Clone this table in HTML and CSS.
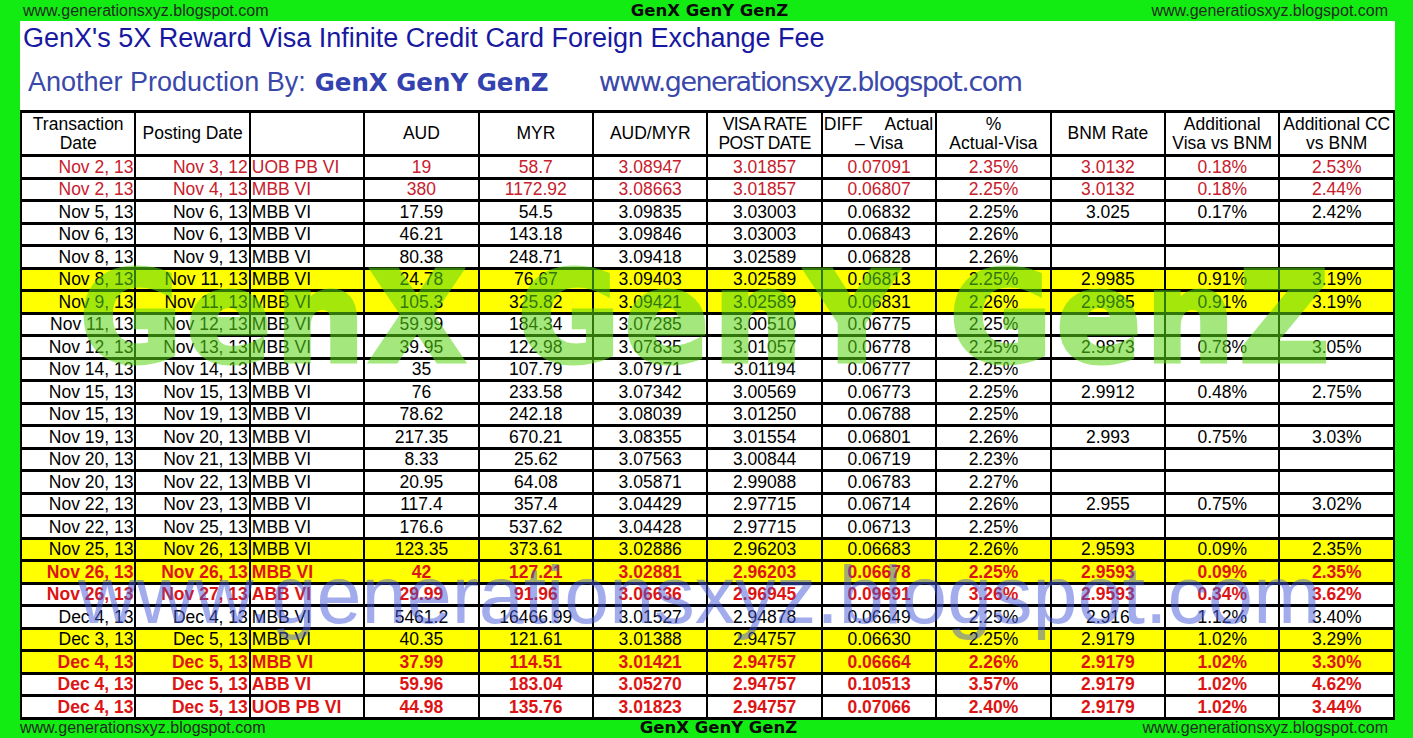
FILE: index.html
```html
<!DOCTYPE html>
<html>
<head>
<meta charset="utf-8">
<link rel="stylesheet" href="styles.css">
</head>
<body>
<div class="frame">
  <div class="bar top-bar">
    <span class="bar-url left">www.generationsxyz.blogspot.com</span>
    <span class="bar-brand">GenX GenY GenZ</span>
    <span class="bar-url right">www.generatiosxyz.blogspot.com</span>
  </div>
  <div class="sheet">
    <div class="title">GenX's 5X Reward Visa Infinite Credit Card Foreign Exchange Fee</div>
    <div class="subtitle"><span class="by">Another Production By:</span><span class="brand">GenX GenY GenZ</span><span class="site">www.generationsxyz.blogspot.com</span></div>
    <table class="grid">
      <colgroup>
        <col><col><col><col><col><col><col><col><col><col><col><col>
      </colgroup>
      <thead>
        <tr class="head">
          <th>Transaction<br>Date</th>
          <th>Posting Date</th>
          <th></th>
          <th>AUD</th>
          <th>MYR</th>
          <th>AUD/MYR</th>
          <th class="tight">VISA RATE<br>POST DATE</th>
          <th class="diff"><div class="diff-top"><span>DIFF</span><span>Actual</span></div><div>– Visa</div></th>
          <th>%<br>Actual-Visa</th>
          <th>BNM Rate</th>
          <th>Additional<br>Visa vs BNM</th>
          <th>Additional CC<br>vs BNM</th>
        </tr>
      </thead>
      <tbody>
        <tr class="red"><td>Nov 2, 13</td><td>Nov 3, 12</td><td>UOB PB VI</td><td>19</td><td>58.7</td><td>3.08947</td><td>3.01857</td><td>0.07091</td><td>2.35%</td><td>3.0132</td><td>0.18%</td><td>2.53%</td></tr>
        <tr class="red"><td>Nov 2, 13</td><td>Nov 4, 13</td><td>MBB VI</td><td>380</td><td>1172.92</td><td>3.08663</td><td>3.01857</td><td>0.06807</td><td>2.25%</td><td>3.0132</td><td>0.18%</td><td>2.44%</td></tr>
        <tr><td>Nov 5, 13</td><td>Nov 6, 13</td><td>MBB VI</td><td>17.59</td><td>54.5</td><td>3.09835</td><td>3.03003</td><td>0.06832</td><td>2.25%</td><td>3.025</td><td>0.17%</td><td>2.42%</td></tr>
        <tr><td>Nov 6, 13</td><td>Nov 6, 13</td><td>MBB VI</td><td>46.21</td><td>143.18</td><td>3.09846</td><td>3.03003</td><td>0.06843</td><td>2.26%</td><td></td><td></td><td></td></tr>
        <tr><td>Nov 8, 13</td><td>Nov 9, 13</td><td>MBB VI</td><td>80.38</td><td>248.71</td><td>3.09418</td><td>3.02589</td><td>0.06828</td><td>2.26%</td><td></td><td></td><td></td></tr>
        <tr class="yellow"><td>Nov 8, 13</td><td>Nov 11, 13</td><td>MBB VI</td><td>24.78</td><td>76.67</td><td>3.09403</td><td>3.02589</td><td>0.06813</td><td>2.25%</td><td>2.9985</td><td>0.91%</td><td>3.19%</td></tr>
        <tr class="yellow"><td>Nov 9, 13</td><td>Nov 11, 13</td><td>MBB VI</td><td>105.3</td><td>325.82</td><td>3.09421</td><td>3.02589</td><td>0.06831</td><td>2.26%</td><td>2.9985</td><td>0.91%</td><td>3.19%</td></tr>
        <tr><td>Nov 11, 13</td><td>Nov 12, 13</td><td>MBB VI</td><td>59.99</td><td>184.34</td><td>3.07285</td><td>3.00510</td><td>0.06775</td><td>2.25%</td><td></td><td></td><td></td></tr>
        <tr><td>Nov 12, 13</td><td>Nov 13, 13</td><td>MBB VI</td><td>39.95</td><td>122.98</td><td>3.07835</td><td>3.01057</td><td>0.06778</td><td>2.25%</td><td>2.9873</td><td>0.78%</td><td>3.05%</td></tr>
        <tr><td>Nov 14, 13</td><td>Nov 14, 13</td><td>MBB VI</td><td>35</td><td>107.79</td><td>3.07971</td><td>3.01194</td><td>0.06777</td><td>2.25%</td><td></td><td></td><td></td></tr>
        <tr><td>Nov 15, 13</td><td>Nov 15, 13</td><td>MBB VI</td><td>76</td><td>233.58</td><td>3.07342</td><td>3.00569</td><td>0.06773</td><td>2.25%</td><td>2.9912</td><td>0.48%</td><td>2.75%</td></tr>
        <tr><td>Nov 15, 13</td><td>Nov 19, 13</td><td>MBB VI</td><td>78.62</td><td>242.18</td><td>3.08039</td><td>3.01250</td><td>0.06788</td><td>2.25%</td><td></td><td></td><td></td></tr>
        <tr><td>Nov 19, 13</td><td>Nov 20, 13</td><td>MBB VI</td><td>217.35</td><td>670.21</td><td>3.08355</td><td>3.01554</td><td>0.06801</td><td>2.26%</td><td>2.993</td><td>0.75%</td><td>3.03%</td></tr>
        <tr><td>Nov 20, 13</td><td>Nov 21, 13</td><td>MBB VI</td><td>8.33</td><td>25.62</td><td>3.07563</td><td>3.00844</td><td>0.06719</td><td>2.23%</td><td></td><td></td><td></td></tr>
        <tr><td>Nov 20, 13</td><td>Nov 22, 13</td><td>MBB VI</td><td>20.95</td><td>64.08</td><td>3.05871</td><td>2.99088</td><td>0.06783</td><td>2.27%</td><td></td><td></td><td></td></tr>
        <tr><td>Nov 22, 13</td><td>Nov 23, 13</td><td>MBB VI</td><td>117.4</td><td>357.4</td><td>3.04429</td><td>2.97715</td><td>0.06714</td><td>2.26%</td><td>2.955</td><td>0.75%</td><td>3.02%</td></tr>
        <tr><td>Nov 22, 13</td><td>Nov 25, 13</td><td>MBB VI</td><td>176.6</td><td>537.62</td><td>3.04428</td><td>2.97715</td><td>0.06713</td><td>2.25%</td><td></td><td></td><td></td></tr>
        <tr class="yellow"><td>Nov 25, 13</td><td>Nov 26, 13</td><td>MBB VI</td><td>123.35</td><td>373.61</td><td>3.02886</td><td>2.96203</td><td>0.06683</td><td>2.26%</td><td>2.9593</td><td>0.09%</td><td>2.35%</td></tr>
        <tr class="yellow hot"><td>Nov 26, 13</td><td>Nov 26, 13</td><td>MBB VI</td><td>42</td><td>127.21</td><td>3.02881</td><td>2.96203</td><td>0.06678</td><td>2.25%</td><td>2.9593</td><td>0.09%</td><td>2.35%</td></tr>
        <tr class="hot"><td>Nov 26, 13</td><td>Nov 27, 13</td><td>ABB VI</td><td>29.99</td><td>91.96</td><td>3.06636</td><td>2.96945</td><td>0.09691</td><td>3.26%</td><td>2.9593</td><td>0.34%</td><td>3.62%</td></tr>
        <tr><td>Dec 4, 13</td><td>Dec 4, 13</td><td>MBB VI</td><td>5461.2</td><td>16466.99</td><td>3.01527</td><td>2.94878</td><td>0.06649</td><td>2.25%</td><td>2.916</td><td>1.12%</td><td>3.40%</td></tr>
        <tr class="yellow"><td>Dec 3, 13</td><td>Dec 5, 13</td><td>MBB VI</td><td>40.35</td><td>121.61</td><td>3.01388</td><td>2.94757</td><td>0.06630</td><td>2.25%</td><td>2.9179</td><td>1.02%</td><td>3.29%</td></tr>
        <tr class="yellow hot"><td>Dec 4, 13</td><td>Dec 5, 13</td><td>MBB VI</td><td>37.99</td><td>114.51</td><td>3.01421</td><td>2.94757</td><td>0.06664</td><td>2.26%</td><td>2.9179</td><td>1.02%</td><td>3.30%</td></tr>
        <tr class="hot"><td>Dec 4, 13</td><td>Dec 5, 13</td><td>ABB VI</td><td>59.96</td><td>183.04</td><td>3.05270</td><td>2.94757</td><td>0.10513</td><td>3.57%</td><td>2.9179</td><td>1.02%</td><td>4.62%</td></tr>
        <tr class="hot"><td>Dec 4, 13</td><td>Dec 5, 13</td><td>UOB PB VI</td><td>44.98</td><td>135.76</td><td>3.01823</td><td>2.94757</td><td>0.07066</td><td>2.40%</td><td>2.9179</td><td>1.02%</td><td>3.44%</td></tr>
      </tbody>
    </table>
  </div>
  <div class="bar bottom-bar">
    <span class="bar-url left">www.generationsxyz.blogspot.com</span>
    <span class="bar-brand">GenX GenY GenZ</span>
    <span class="bar-url right">www.generationsxyz.blogspot.com</span>
  </div>
  <div class="mark mark-brand">GenX GenY GenZ</div>
  <div class="mark mark-site">www.generationsxyz.blogspot.com</div>
</div>
</body>
</html>
```

FILE: styles.css
```css
* { box-sizing: border-box; }

html, body {
  margin: 0;
  padding: 0;
  background: #12ec12;
}

.frame {
  position: relative;
  width: 1413px;
  height: 738px;
  overflow: hidden;
  background: #12ec12;
  display: flex;
  flex-direction: column;
  font-family: "Liberation Sans", Arial, sans-serif;
}

.bar {
  display: grid;
  grid-template-columns: 1fr auto 1fr;
  align-items: center;
  height: 21px;
  line-height: 20px;
}

.bar-url {
  font-size: 16px;
  color: #1f2c1f;
  white-space: nowrap;
}

.bar-url.left { justify-self: start; }
.bar-url.right { justify-self: end; padding-right: 25px; }

.bar-brand {
  font-family: "DejaVu Sans", Verdana, sans-serif;
  font-weight: bold;
  font-size: 16.5px;
  color: #0a0a0a;
}

.top-bar .bar-url.left { padding-left: 23px; }
.top-bar .bar-brand { padding-left: 6px; }

.bottom-bar { height: 20px; }
.bottom-bar .bar-url.left { padding-left: 20px; }
.bottom-bar .bar-brand { padding-left: 24px; }

.sheet {
  margin: 0 18px 0 20px;
  background: #ffffff;
  height: 697px;
  display: flex;
  flex-direction: column;
}

.title {
  padding: 2px 0 0 3px;
  font-size: 27px;
  line-height: 30px;
  color: #1818a0;
  white-space: nowrap;
}

.subtitle {
  margin-top: 14px;
  height: 30px;
  padding-left: 8px;
  line-height: 30px;
  white-space: nowrap;
  color: #3a48aa;
}

.subtitle .by { font-size: 27px; }

.subtitle .brand {
  margin-left: 9px;
  font-family: "DejaVu Sans", Verdana, sans-serif;
  font-weight: bold;
  font-size: 24.5px;
  color: #3442b0;
}

.subtitle .site {
  margin-left: 50px;
  font-family: "DejaVu Sans", Verdana, sans-serif;
  font-size: 27px;
  letter-spacing: -1.55px;
  color: #3a48aa;
}

.grid {
  margin-top: 13px;
  width: 1375px;
  table-layout: fixed;
  border-collapse: collapse;
  font-size: 17.5px;
  color: #000;
}

.grid th,
.grid td {
  border-style: solid;
  border-color: #000;
  border-width: 3px 2px;
  padding: 0;
  white-space: nowrap;
  overflow: hidden;
}

.grid th {
  font-weight: normal;
  text-align: center;
  line-height: 19px;
  height: 44px;
}

.grid th.tight { letter-spacing: -0.6px; }

.diff-top {
  display: flex;
  justify-content: space-between;
  padding: 0 2px 0 1px;
}

.grid td {
  height: 22.5px;
  line-height: 18px;
  text-align: center;
}

.grid td:nth-child(1),
.grid td:nth-child(2) {
  text-align: right;
  padding-right: 1px;
}

.grid td:nth-child(3) {
  text-align: left;
  padding-left: 1px;
}

.grid tr.yellow td { background: #ffff00; }
.grid tr.red td { color: #c8202c; }
.grid tr.hot td { color: #dd1414; font-weight: bold; }

.mark {
  position: absolute;
  pointer-events: none;
  white-space: nowrap;
  line-height: 1;
}

.mark-brand {
  left: 80px;
  top: 256px;
  font-family: "DejaVu Sans", Verdana, sans-serif;
  font-weight: bold;
  font-size: 124px;
  letter-spacing: 5px;
  color: #5ad714;
  -webkit-text-stroke: 5px #5ad714;
  opacity: 0.55;
}

.mark-site {
  left: 78px;
  top: 555px;
  font-family: "Liberation Sans", Arial, sans-serif;
  font-size: 81px;
  color: rgba(70, 90, 220, 0.5);
}
```
